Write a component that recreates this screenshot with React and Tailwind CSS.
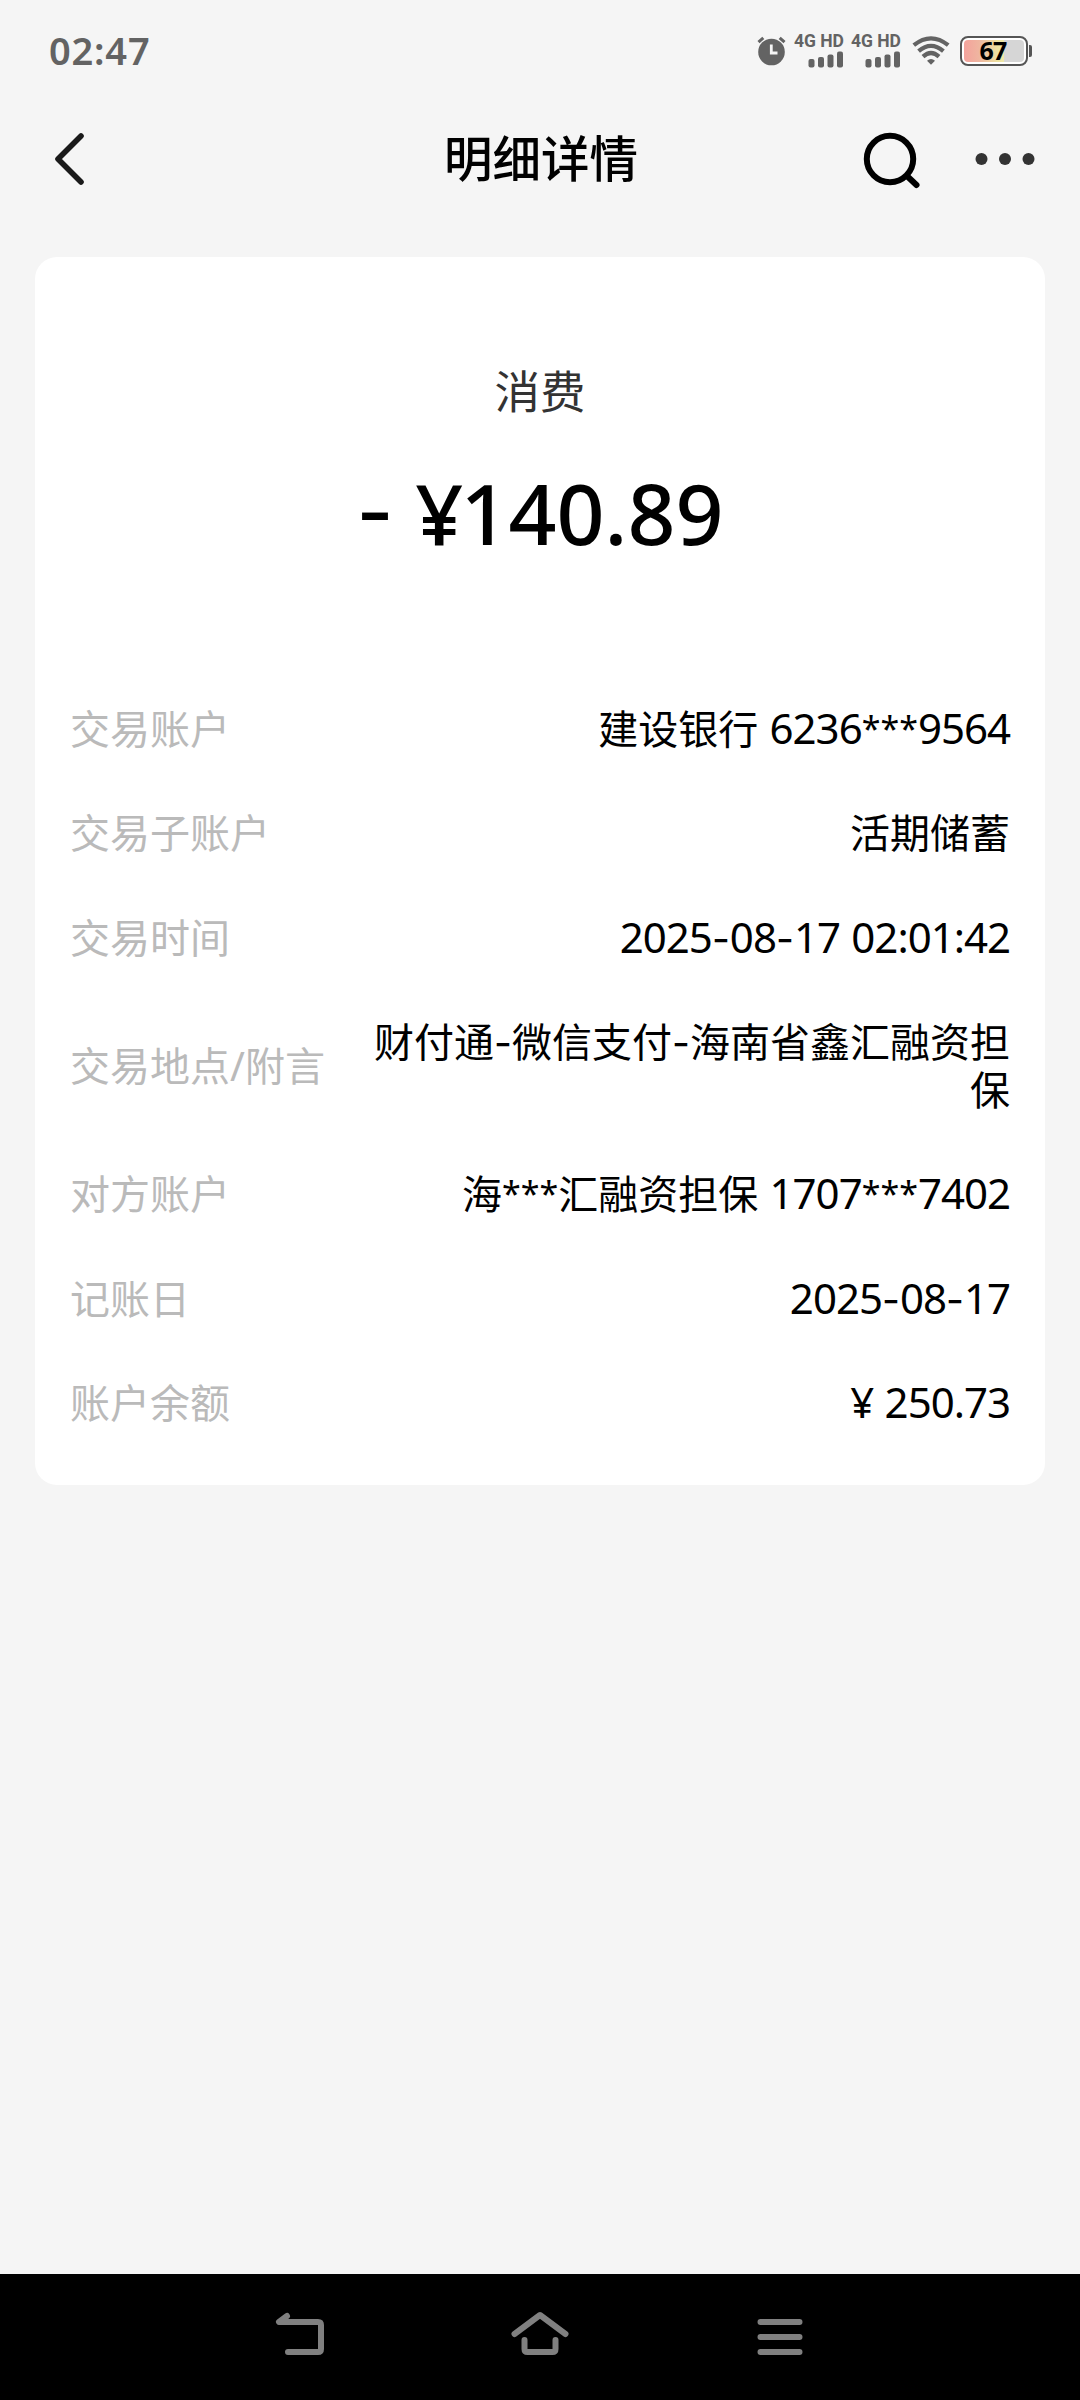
import React from "react";

const rows = [
  { label: "交易账户", value: "建设银行 6236***9564" },
  { label: "交易子账户", value: "活期储蓄" },
  { label: "交易时间", value: "2025-08-17 02:01:42" },
  { label: "交易地点/附言", value: "财付通-微信支付-海南省鑫汇融资担保" },
  { label: "对方账户", value: "海***汇融资担保 1707***7402" },
  { label: "记账日", value: "2025-08-17" },
  { label: "账户余额", value: "¥ 250.73" },
];

// Latin digits, hyphens and masking asterisks each have their own metrics beside the Chinese glyphs.
function Mixed({ text }) {
  return text.split(/(\*+|-|[0-9:. ¥]+)/).map((part, i) => {
    if (part === "") return null;
    if (part === "-")
      return <span key={i} className="font-['Inter',sans-serif] text-[39px] leading-none">-</span>;
    if (part[0] === "*")
      return <span key={i} className="align-[3px] text-[34px] leading-none">{part}</span>;
    if (/^[0-9:. ¥]+$/.test(part))
      return <span key={i} className="text-[42px] leading-none tracking-[-1px] [word-spacing:1.5px]">{part}</span>;
    return part;
  });
}

function Signal() {
  return (
    <div className="flex h-[34px] w-[48px] flex-col items-end">
      <span className="h-[15px] whitespace-nowrap font-['Roboto',sans-serif] text-[17.5px] font-bold leading-[15px]">4G HD</span>
      <svg className="mt-[2px]" width="36" height="17" viewBox="0 0 36 17" fill="currentColor">
        <rect x="0.5" y="8" width="6" height="8.5" rx="2" />
        <rect x="10" y="6" width="6" height="10.5" rx="2" />
        <rect x="19.5" y="3.5" width="6" height="13" rx="2" />
        <rect x="29" y="0.5" width="6" height="16" rx="2" />
      </svg>
    </div>
  );
}

function StatusBar() {
  return (
    <div className="flex h-[102px] items-center justify-between pl-[49px] pr-[48px] text-[#636363]">
      <span className="mb-[3px] text-[38px] font-semibold leading-none tracking-[0.8px]">02:47</span>
      <div className="flex items-center">
        <svg width="30" height="30" viewBox="0 0 30 30">
          <circle cx="14.5" cy="16" r="13.3" fill="currentColor" />
          <path d="M1.5 6.2 6.3 1.8M27.5 6.2 22.7 1.8" stroke="currentColor" strokeWidth="3" />
          <path d="M14.3 8.5V17H20.5" fill="none" stroke="#f5f5f5" strokeWidth="2.8" />
        </svg>
        <div className="ml-[9px]"><Signal /></div>
        <div className="ml-[9px]"><Signal /></div>
        <svg className="ml-[11px]" width="38" height="30" viewBox="0 0 38 30" fill="none" stroke="currentColor" strokeWidth="4.2">
          <path d="M1.8 9.2Q19-4.6 36.2 9.2" />
          <path d="M6.6 15.2Q19 4.6 31.4 15.2" />
          <path d="M11 20.6Q19 13.4 27 20.6" />
          <path d="M15 24.8Q19 21.4 23 24.8L19 28.8Z" fill="currentColor" stroke="none" />
        </svg>
        <div className="ml-[10px] flex items-center">
          <div className="h-[30px] w-[68px] rounded-[8px] border-2 border-[#555] bg-white p-[2px]">
            <div className="flex h-full items-center justify-center rounded-[4px] bg-[linear-gradient(90deg,#f4a29c_0%,#efb5a0_25%,#eee0a0_55%,#eee9a8_67%,#d6d6d6_67%,#d6d6d6_100%)] pr-[2px] font-['Open_Sans',sans-serif] text-[25px] font-bold leading-none tracking-[-0.8px] text-black">
              <span className="mb-[2px]">67</span>
            </div>
          </div>
          <div className="ml-px h-[12px] w-[3px] rounded-r-[2px] bg-[#555]" />
        </div>
      </div>
    </div>
  );
}

function Header() {
  return (
    <div className="grid h-[114px] grid-cols-[1fr_200px_1fr] items-center pl-[50px] pr-[42px]">
      <svg width="40" height="56" viewBox="0 0 40 56" fill="none" stroke="#1a1a1a" strokeWidth="5.6" strokeLinecap="round" strokeLinejoin="round">
        <path d="M31 5 8 28 31 51" />
      </svg>
      <h1 className="-ml-[3px] mb-px mr-[3px] whitespace-nowrap text-center text-[48.5px] font-medium leading-none text-black">明细详情</h1>
      <div className="flex items-center justify-end">
        <svg width="60" height="60" viewBox="0 0 60 60" fill="none" stroke="#000" strokeWidth="6" strokeLinecap="round">
          <circle cx="30" cy="30" r="23.2" />
          <path d="M47 47 56.5 56" />
        </svg>
        <svg className="ml-[52px]" width="66" height="20" viewBox="0 0 66 20" fill="#333">
          <circle cx="9.5" cy="10" r="6" />
          <circle cx="33" cy="10" r="6" />
          <circle cx="56.5" cy="10" r="6" />
        </svg>
      </div>
    </div>
  );
}

function NavBar() {
  return (
    <div className="flex h-[126px] items-center justify-between bg-black px-[270px] text-[#808080]">
      <svg width="60" height="60" viewBox="0 0 60 60" fill="none" stroke="currentColor" strokeWidth="6" strokeLinecap="round" strokeLinejoin="round">
        <path d="M17 9 9 15H48Q51 15 51 18V42Q51 45 48 45H18" />
      </svg>
      <svg width="60" height="60" viewBox="0 0 60 60" fill="none" stroke="currentColor" strokeWidth="6" strokeLinecap="round" strokeLinejoin="round">
        <path d="M4.5 27 30 8 55.5 27M14.5 33V42Q14.5 45 17.5 45H42.5Q45.5 45 45.5 42V33" />
      </svg>
      <svg width="60" height="60" viewBox="0 0 60 60" fill="none" stroke="currentColor" strokeWidth="6" strokeLinecap="round">
        <path d="M10.5 15H49.5M10.5 30H49.5M10.5 45H49.5" />
      </svg>
    </div>
  );
}

export default function App() {
  return (
    <div lang="zh-CN" className="flex h-[2400px] w-[1080px] flex-col bg-[#f5f5f5] font-['Noto_Sans','Noto_Sans_CJK_SC',sans-serif]">
      <StatusBar />
      <Header />
      <main className="mx-[35px] mt-[41px] h-[1228px] rounded-[22px] bg-white px-[35px]">
        <div className="flex h-[419.4px] flex-col items-center pt-[105px]">
          <div className="text-[45.5px] leading-[58px] text-[#333]">消费</div>
          <div className="mt-[43px] whitespace-pre text-[84px] font-medium leading-[100px] text-black">
            <span className="align-[4px] font-['Inter',sans-serif] text-[80px] leading-none">-</span>
            <span className="leading-none"> </span>
            <span className="leading-none tracking-[-3px]">¥</span>
            <span className="leading-none">140.89</span>
          </div>
        </div>
        {rows.map((row) => (
          <div key={row.label} className="flex items-center justify-between py-[28.5px] text-[40px] leading-[47.5px]">
            <span className="whitespace-nowrap text-[#bababa]">{row.label}</span>
            <div className="max-w-[650px] break-all text-right text-black">
              <Mixed text={row.value} />
            </div>
          </div>
        ))}
      </main>
      <div className="flex-1" />
      <NavBar />
    </div>
  );
}
